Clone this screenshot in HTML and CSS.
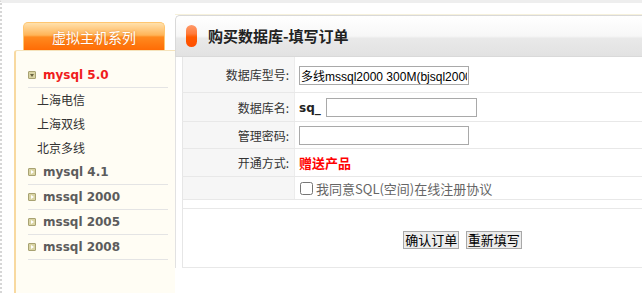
FILE: index.html
```html
<!DOCTYPE html>
<html lang="zh-CN">
<head>
    <meta charset="UTF-8">
    <title>购买数据库-填写订单</title>
    <link rel="stylesheet" href="styles.css">
</head>
<body>
    <div class="page">
        <div class="sidebar">
            <div class="tab">虚拟主机系列</div>
            <div class="menu-box">
                <ul class="menu">
                    <li class="item open"><span class="ico"></span>mysql 5.0</li>
                    <li class="sub">上海电信</li>
                    <li class="sub">上海双线</li>
                    <li class="sub">北京多线</li>
                    <li class="item"><span class="ico"></span>mysql 4.1</li>
                    <li class="item"><span class="ico"></span>mssql 2000</li>
                    <li class="item"><span class="ico"></span>mssql 2005</li>
                    <li class="item"><span class="ico"></span>mssql 2008</li>
                </ul>
            </div>
        </div>
        <div class="main">
            <div class="main-head">
                <span class="pill"></span>
                <h2>购买数据库-填写订单</h2>
            </div>
            <div class="main-body">
                <table class="order">
                    <tr class="r1">
                        <td class="label">数据库型号:</td>
                        <td class="value"><input type="text" class="field wide" value="多线mssql2000 300M(bjsql2000)"></td>
                    </tr>
                    <tr class="r2">
                        <td class="label">数据库名:</td>
                        <td class="value"><b class="prefix">sq_</b><input type="text" class="field"></td>
                    </tr>
                    <tr class="r3">
                        <td class="label">管理密码:</td>
                        <td class="value"><input type="password" class="field"></td>
                    </tr>
                    <tr class="r4">
                        <td class="label">开通方式:</td>
                        <td class="value"><span class="gift">赠送产品</span></td>
                    </tr>
                    <tr class="r5">
                        <td class="label"></td>
                        <td class="value"><label class="agree"><input type="checkbox"> 我同意SQL(空间)在线注册协议</label></td>
                    </tr>
                    <tr class="spacer">
                        <td colspan="2"></td>
                    </tr>
                    <tr class="actions">
                        <td colspan="2">
                            <button type="submit" class="btn">确认订单</button>
                            <button type="reset" class="btn">重新填写</button>
                        </td>
                    </tr>
                </table>
            </div>
        </div>
    </div>
</body>
</html>
```

FILE: styles.css
```css
body {
    margin: 0;
    background-color: #fff;
    font-family: "Noto Sans CJK SC", "DejaVu Sans", sans-serif;
    font-size: 12px;
    color: #333;
}
.page {
    display: flex;
    height: 293px;
    box-sizing: border-box;
    border-top: 3px solid #eeeeee;
    border-left: 2px dotted #d6d6d6;
    overflow: hidden;
}
.sidebar {
    flex-shrink: 0;
    width: 161px;
    margin-left: 12px;
    display: flex;
    flex-direction: column;
}
.tab {
    margin: 19px 0 0 9px;
    width: 140px;
    height: 27px;
    line-height: 28px;
    border: 1px solid #ffc670;
    border-bottom: none;
    border-radius: 5px 5px 0 0;
    background: linear-gradient(to bottom, #ffe1ad 0%, #ffb457 45%, #ff8a1f 52%, #ff6c05 100%);
    color: #fff;
    font-size: 14px;
    text-align: center;
    text-shadow: 0 0 2px rgba(200, 80, 0, 0.5);
}
.menu-box {
    flex: 1;
    background-color: #fffdf4;
    border-left: 2px solid #f8d9a0;
    border-top: 1px solid #f5e3bb;
    border-radius: 3px 0 0 0;
}
.menu {
    list-style: none;
    margin: 0;
    padding: 12px 7px 0 12px;
}
.menu li {
    height: 24px;
    line-height: 24px;
}
.menu .item {
    display: flex;
    align-items: center;
    border-bottom: 1px solid #e4e4e4;
    font-family: "DejaVu Sans", Verdana, sans-serif;
    font-weight: bold;
    font-size: 12px;
    color: #5c5c5c;
}
.menu .item.open {
    color: #f01c1c;
}
.menu .sub {
    padding-left: 9px;
    color: #333;
}
.ico {
    position: relative;
    width: 6px;
    height: 6px;
    margin-right: 7px;
    border: 1px solid #a8a272;
    border-radius: 1px;
    background-color: #d9d4a4;
}
.ico::after {
    content: "";
    position: absolute;
    left: 2px;
    top: 1px;
    border-left: 3px solid #fff;
    border-top: 2px solid transparent;
    border-bottom: 2px solid transparent;
}
.open .ico::after {
    left: 1px;
    top: 2px;
    border-top: 3px solid #6a6440;
    border-left: 2px solid transparent;
    border-right: 2px solid transparent;
    border-bottom: none;
}
.main {
    flex: 1;
    min-width: 0;
    margin-top: 11px;
    border-top: 1px solid #f6f1dc;
    display: flex;
    flex-direction: column;
}
.main-head {
    display: flex;
    align-items: center;
    height: 40px;
    border: 1px solid #d9d9d9;
    border-right: none;
    border-radius: 5px 0 0 0;
    background: linear-gradient(to bottom, #ffffff 0%, #f7f7f7 50%, #e9e9e9 56%, #e2e2e2 100%);
    padding-left: 10px;
}
.pill {
    width: 11px;
    height: 22px;
    border-radius: 6px;
    background: linear-gradient(to bottom, #ff9a6a 0%, #ff7a3a 40%, #ff5a00 55%, #ff4e00 100%);
    margin-right: 11px;
}
.main-head h2 {
    margin: 0 0 2px 0;
    font-size: 15px;
    font-weight: bold;
    color: #222;
}
.main-body {
    border-left: 1px solid #e2e2e2;
    padding-left: 6px;
    height: 211px;
}
.order {
    width: 560px;
    border-collapse: collapse;
    border-left: 1px solid #e6e6e6;
}
.order td {
    padding: 0;
    border-bottom: 1px solid #e8e8e8;
}
.order .label {
    width: 106px;
    padding-right: 5px;
    text-align: right;
    background-color: #f6f6f6;
    border-right: 1px solid #ececec;
}
.order .value {
    padding-left: 4px;
}
.r1 td { height: 35px; }
.r2 td { height: 28px; }
.r3 td { height: 26px; }
.r4 td { height: 27px; }
.r5 td { height: 22px; }
.spacer td { height: 8px; }
.actions td {
    height: 58px;
    text-align: center;
}
.field {
    box-sizing: border-box;
    width: 170px;
    height: 19px;
    padding: 0 1px;
    border: 1px solid #a9a9a9;
    font-family: "Liberation Sans", "Noto Sans CJK SC", sans-serif;
    font-size: 12px;
    color: #000;
    vertical-align: middle;
}
.r2 .field {
    width: 151px;
}
.prefix {
    font-family: "DejaVu Sans", Verdana, sans-serif;
    font-size: 12px;
    color: #222;
    margin-right: 5px;
    vertical-align: middle;
}
.gift {
    color: #ff0000;
    font-weight: bold;
    font-size: 13px;
}
.agree {
    color: #666;
    font-size: 13px;
    display: inline-flex;
    align-items: center;
}
.agree input {
    margin: 0 3px 0 1px;
    width: 13px;
    height: 13px;
}
.btn {
    height: 18px;
    padding: 0 1px;
    margin: 3px 2px 0;
    border: 1px solid #a8a8a8;
    background-color: #ececec;
    font-family: "Noto Sans CJK SC", sans-serif;
    font-size: 13px;
    line-height: 15px;
    color: #000;
}
```
